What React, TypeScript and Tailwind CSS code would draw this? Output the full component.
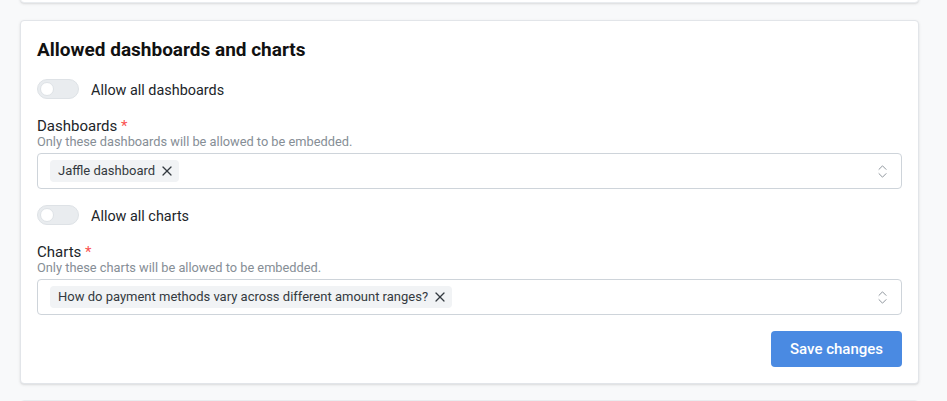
import { ChevronsUpDown, X } from 'lucide-react';

function Toggle({ label }: { label: string }) {
  return (
    <div className="flex h-[20px] items-center gap-3">
      <div className="flex h-[20px] w-[42px] items-center rounded-full border border-[#dee2e6] bg-[#e9ecef] px-[2px]">
        <div className="h-[14px] w-[14px] rounded-full border border-[#dee2e6] bg-white" />
      </div>
      <span className="mt-[3px] text-[14.4px] leading-[20px] text-[#212529]">{label}</span>
    </div>
  );
}

function MultiSelect({
  label,
  description,
  value,
}: {
  label: string;
  description: string;
  value: string;
}) {
  return (
    <div className="flex flex-col">
      <div className="mt-[1px] text-[15px] leading-[18px] text-[#212529]">
        {label} <span className="text-[#fa5252]">*</span>
      </div>
      <div className="text-[12.8px] leading-[14px] text-[#868e96]">{description}</div>
      <div className="mt-[4px] flex h-[36px] items-center justify-between rounded-[4px] border border-[#ced4da] bg-white pl-[12px] pr-[10px]">
        <span className="flex h-[22px] items-center gap-[4px] rounded-[4px] bg-[#f1f3f5] pl-[8px] pr-[4px] text-[13px] text-[#343a40]">
          {value}
          <X size={16} strokeWidth={1.8} className="text-[#343a40]" />
        </span>
        <ChevronsUpDown size={17} strokeWidth={1.4} className="text-[#8e959c]" />
      </div>
    </div>
  );
}

export default function App() {
  return (
    <div
      className="h-[401px] overflow-hidden bg-[#f8f9fa]"
      style={{ fontFamily: 'Roboto, "Noto Sans", sans-serif' }}
    >
      <div className="ml-[20px] w-[899px]">
        <div className="-mt-[20px] h-[23px] rounded-b-[4px] border border-[#e9ecef] bg-white shadow-sm" />
        <div className="mt-[17px] flex flex-col rounded-[4px] border border-[#e2e5e9] bg-white px-[16px] pb-[16px] pt-[17px] shadow-sm">
          <h2 className="text-[19px] font-bold leading-[24px] text-[#111]">Allowed dashboards and charts</h2>
          <div className="mt-[17px]">
            <Toggle label="Allow all dashboards" />
          </div>
          <div className="mt-[17px]">
            <MultiSelect
              label="Dashboards"
              description="Only these dashboards will be allowed to be embedded."
              value="Jaffle dashboard"
            />
          </div>
          <div className="mt-[16px]">
            <Toggle label="Allow all charts" />
          </div>
          <div className="mt-[17px]">
            <MultiSelect
              label="Charts"
              description="Only these charts will be allowed to be embedded."
              value="How do payment methods vary across different amount ranges?"
            />
          </div>
          <div className="mt-[16px] flex justify-end">
            <button className="h-[36px] w-[131px] rounded-[4px] bg-[#4a8ae2] text-[15px] font-medium text-white">
              Save changes
            </button>
          </div>
        </div>
        <div className="mt-[16px] h-[20px] rounded-t-[4px] border border-[#e9ecef] bg-white" />
      </div>
    </div>
  );
}
